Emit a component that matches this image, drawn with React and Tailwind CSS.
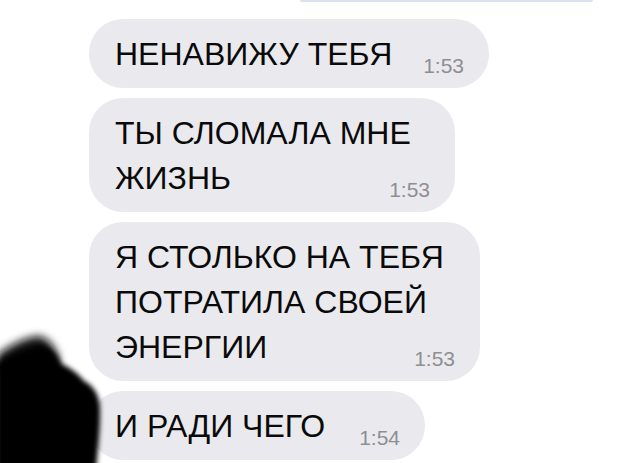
const messages = [
  { lines: ["НЕНАВИЖУ ТЕБЯ"], time: "1:53", width: "w-[400px]" },
  { lines: ["ТЫ СЛОМАЛА МНЕ", "ЖИЗНЬ"], time: "1:53", width: "w-[366px]" },
  {
    lines: ["Я СТОЛЬКО НА ТЕБЯ", "ПОТРАТИЛА СВОЕЙ", "ЭНЕРГИИ"],
    time: "1:53",
    width: "w-[391px]",
  },
  { lines: ["И РАДИ ЧЕГО"], time: "1:54", width: "w-[336px]" },
];

const Bubble = ({ lines, time, width }) => {
  const last = lines[lines.length - 1];
  return (
    <div
      className={`${width} rounded-[34px] bg-[#eaeaee] pl-[26px] pr-[25px] pt-[13px] pb-[11px] text-[32px] leading-[45px] text-[#0a0a0a] whitespace-nowrap`}
    >
      {lines.slice(0, -1).map((line) => (
        <div key={line}>{line}</div>
      ))}
      <div className="flex items-end justify-between">
        <span>{last}</span>
        <span className="text-[21px] leading-[22px] text-[#8e8e93]">{time}</span>
      </div>
    </div>
  );
};

// замазанная аватарка слева внизу
const Scribble = () => (
  <svg
    className="absolute left-0 top-[325px]"
    width="120"
    height="138"
    viewBox="0 325 120 138"
  >
    <defs>
      <filter id="soft" x="-20%" y="-20%" width="140%" height="140%">
        <feGaussianBlur stdDeviation="2.6" />
      </filter>
      <filter id="softer" x="-30%" y="-30%" width="160%" height="160%">
        <feGaussianBlur stdDeviation="4" />
      </filter>
    </defs>
    <path
      d="M-4 356 C8 346 24 338 38 336 C50 338 56 348 60 362 L-4 372 Z"
      fill="#111"
      filter="url(#softer)"
    />
    <path
      d="M-4 364 C10 356 24 350 40 346 C52 348 58 356 62 364 C70 368 78 373 84 381 C94 386 101 396 100 414 C100 432 98 448 96 470 L-4 470 Z"
      fill="#000"
      filter="url(#soft)"
    />
  </svg>
);

export default function App() {
  return (
    <div
      className="relative w-[640px] h-[463px] overflow-hidden bg-white"
      style={{ fontFamily: '"Liberation Sans", Arial, sans-serif' }}
    >
      {/* край отправленного сообщения сверху */}
      <div className="ml-[300px] w-[293px] h-[2px] rounded-b-full bg-[#d9e3ef]" />
      <div className="flex flex-col gap-[10px] pl-[89px] pt-[17px]">
        {messages.map((m, i) => (
          <Bubble key={i} {...m} />
        ))}
      </div>
      <Scribble />
    </div>
  );
}
